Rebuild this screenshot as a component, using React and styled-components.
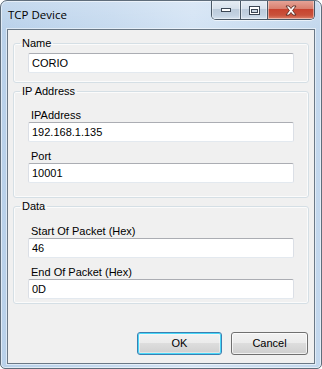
import React from "react";
import styled, { createGlobalStyle } from "styled-components";

const GlobalStyle = createGlobalStyle`
  html, body {
    margin: 0;
    padding: 0;
    background: #ffffff;
    overflow: hidden;
  }
  * {
    box-sizing: border-box;
  }
`;

const fields = [
  {
    title: "Name",
    pad: [3, 9],
    items: [{ value: "CORIO" }],
  },
  {
    title: "IP Address",
    pad: [11, 14],
    items: [
      { label: "IPAddress", value: "192.168.1.135" },
      { label: "Port", value: "10001" },
    ],
  },
  {
    title: "Data",
    pad: [12, 4],
    items: [
      { label: "Start Of Packet (Hex)", value: "46" },
      { label: "End Of Packet (Hex)", value: "0D" },
    ],
  },
];

export default function App() {
  return (
    <>
      <GlobalStyle />
      <Window>
        <TitleBar>
          <Title>TCP Device</Title>
          <CaptionButtons>
            <CaptionButton $w={28}>
              <svg width="12" height="6" viewBox="0 0 12 6">
                <rect x="1.5" y="1.5" width="9" height="3" fill="#fff" stroke="#3b4654" />
              </svg>
            </CaptionButton>
            <CaptionButton $w={27}>
              <svg width="13" height="11" viewBox="0 0 13 11">
                <rect x="1.5" y="1.5" width="10" height="8" fill="#fff" stroke="#3b4654" />
                <rect x="3.5" y="4.5" width="6" height="3" fill="#c9d5e2" stroke="#3b4654" />
              </svg>
            </CaptionButton>
            <CaptionButton $w={47} $close>
              <svg width="14" height="11" viewBox="0 0 14 11">
                <path
                  d="M2 1 L5 1 L7 3.5 L9 1 L12 1 L8.6 5.5 L12 10 L9 10 L7 7.5 L5 10 L2 10 L5.4 5.5 Z"
                  fill="#ffffff"
                  stroke="#5a2a22"
                  strokeWidth="0.9"
                  strokeLinejoin="round"
                />
              </svg>
            </CaptionButton>
          </CaptionButtons>
        </TitleBar>

        <Client>
          {fields.map((group, gi) => (
            <GroupBox key={group.title} $first={gi === 0}>
              <Legend>{group.title}</Legend>
              <GroupBody $top={group.pad[0]} $bottom={group.pad[1]}>
                {group.items.map((item, i) => (
                  <Field key={i} $first={i === 0}>
                    {item.label && <FieldLabel>{item.label}</FieldLabel>}
                    <TextBox>{item.value}</TextBox>
                  </Field>
                ))}
              </GroupBody>
            </GroupBox>
          ))}

          <ButtonRow>
            <Button $default $w={85}>OK</Button>
            <Button $w={77}>Cancel</Button>
          </ButtonRow>
        </Client>
      </Window>
    </>
  );
}

//style
const Window = styled.div`
  width: 322px;
  height: 369px;
  display: flex;
  flex-direction: column;
  border: 1px solid #5f6d7b;
  border-radius: 7px 7px 5px 5px;
  box-shadow: inset 0 0 0 1px rgba(255, 255, 255, 0.55);
  background: linear-gradient(
      to bottom,
      rgba(255, 255, 255, 0.18) 0px,
      rgba(255, 255, 255, 0) 30px
    ),
    linear-gradient(to right, #b9d1ea 0%, #c6daef 35%, #d3e3f4 60%, #c2d7ed 100%);
  overflow: hidden;
`;

const TitleBar = styled.div`
  height: 28px;
  flex: none;
  display: flex;
  align-items: flex-start;
`;

const Title = styled.div`
  padding: 6px 0 0 7px;
  font-family: "Open Sans", "Noto Sans", sans-serif;
  font-size: 11.5px;
  line-height: 16px;
  color: #000000;
`;

const CaptionButtons = styled.div`
  margin: -1px 6px 0 auto;
  height: 20px;
  display: flex;
  border: 1px solid #4a5866;
  border-top: none;
  border-radius: 0 0 5px 5px;
  overflow: hidden;
  box-shadow: 0 1px 0 rgba(255, 255, 255, 0.6);
`;

const CaptionButton = styled.div`
  width: ${(p) => p.$w}px;
  height: 100%;
  display: flex;
  align-items: center;
  justify-content: center;
  padding-top: 1px;
  & + & {
    border-left: 1px solid #4a5866;
  }
  background: ${(p) =>
    p.$close
      ? "linear-gradient(to bottom, #e6a79b 0%, #d9806f 45%, #c7432f 50%, #c9513b 80%, #dc826c 100%)"
      : "linear-gradient(to bottom, #e8eef5 0%, #d7e1ec 45%, #bccbdb 50%, #c3d2e2 80%, #d5e2ef 100%)"};
  box-shadow: inset 0 0 0 1px rgba(255, 255, 255, 0.45);
`;

const Client = styled.div`
  flex: 1;
  margin: 0 6px 4px;
  display: flex;
  flex-direction: column;
  padding: 7px 5px 0;
  background: #f0f0f0;
  border: 1px solid #6a7886;
  box-shadow: 0 0 0 1px rgba(255, 255, 255, 0.5);
  font-family: "Liberation Sans", Arial, sans-serif;
  font-size: 11px;
  color: #000000;
`;

const GroupBox = styled.fieldset`
  margin: ${(p) => (p.$first ? 0 : "2px")} 0 0;
  padding: 0;
  min-width: 0;
  border: 1px solid #d5dfe5;
  border-radius: 3px;
  box-shadow: inset 0 0 0 1px rgba(255, 255, 255, 0.7);
`;

const Legend = styled.legend`
  margin-left: 6px;
  padding: 0 2px;
  font-size: 11px;
  line-height: 13px;
`;

const GroupBody = styled.div`
  display: flex;
  flex-direction: column;
  padding: ${(p) => p.$top}px 14px ${(p) => p.$bottom}px;
`;

const Field = styled.div`
  display: flex;
  flex-direction: column;
  margin-top: ${(p) => (p.$first ? 0 : 8)}px;
`;

const FieldLabel = styled.div`
  padding-left: 3px;
  line-height: 13px;
`;

const TextBox = styled.div`
  height: 20px;
  padding: 0 3px;
  display: flex;
  align-items: center;
  background: #ffffff;
  border: 1px solid #dbdfe6;
  border-top-color: #abadb3;
  border-bottom-color: #e3e9ef;
  border-radius: 2px;
  line-height: 13px;
`;

const ButtonRow = styled.div`
  margin-top: auto;
  display: flex;
  justify-content: flex-end;
  gap: 9px;
  padding: 0 1px 8px 0;
`;

const Button = styled.div`
  width: ${(p) => p.$w}px;
  height: 23px;
  display: flex;
  align-items: center;
  justify-content: center;
  border: 1px solid ${(p) => (p.$default ? "#3c7fb1" : "#707070")};
  border-radius: 3px;
  background: linear-gradient(
    to bottom,
    #f2f2f2 0%,
    #ebebeb 49%,
    #dddddd 50%,
    #cfcfcf 100%
  );
  box-shadow: ${(p) =>
    p.$default
      ? "inset 0 0 0 1px #48d8f9, inset 0 0 0 2px rgba(255,255,255,0.4)"
      : "inset 0 0 0 1px rgba(255,255,255,0.7)"};
  font-size: 11px;
  line-height: 13px;
`;
